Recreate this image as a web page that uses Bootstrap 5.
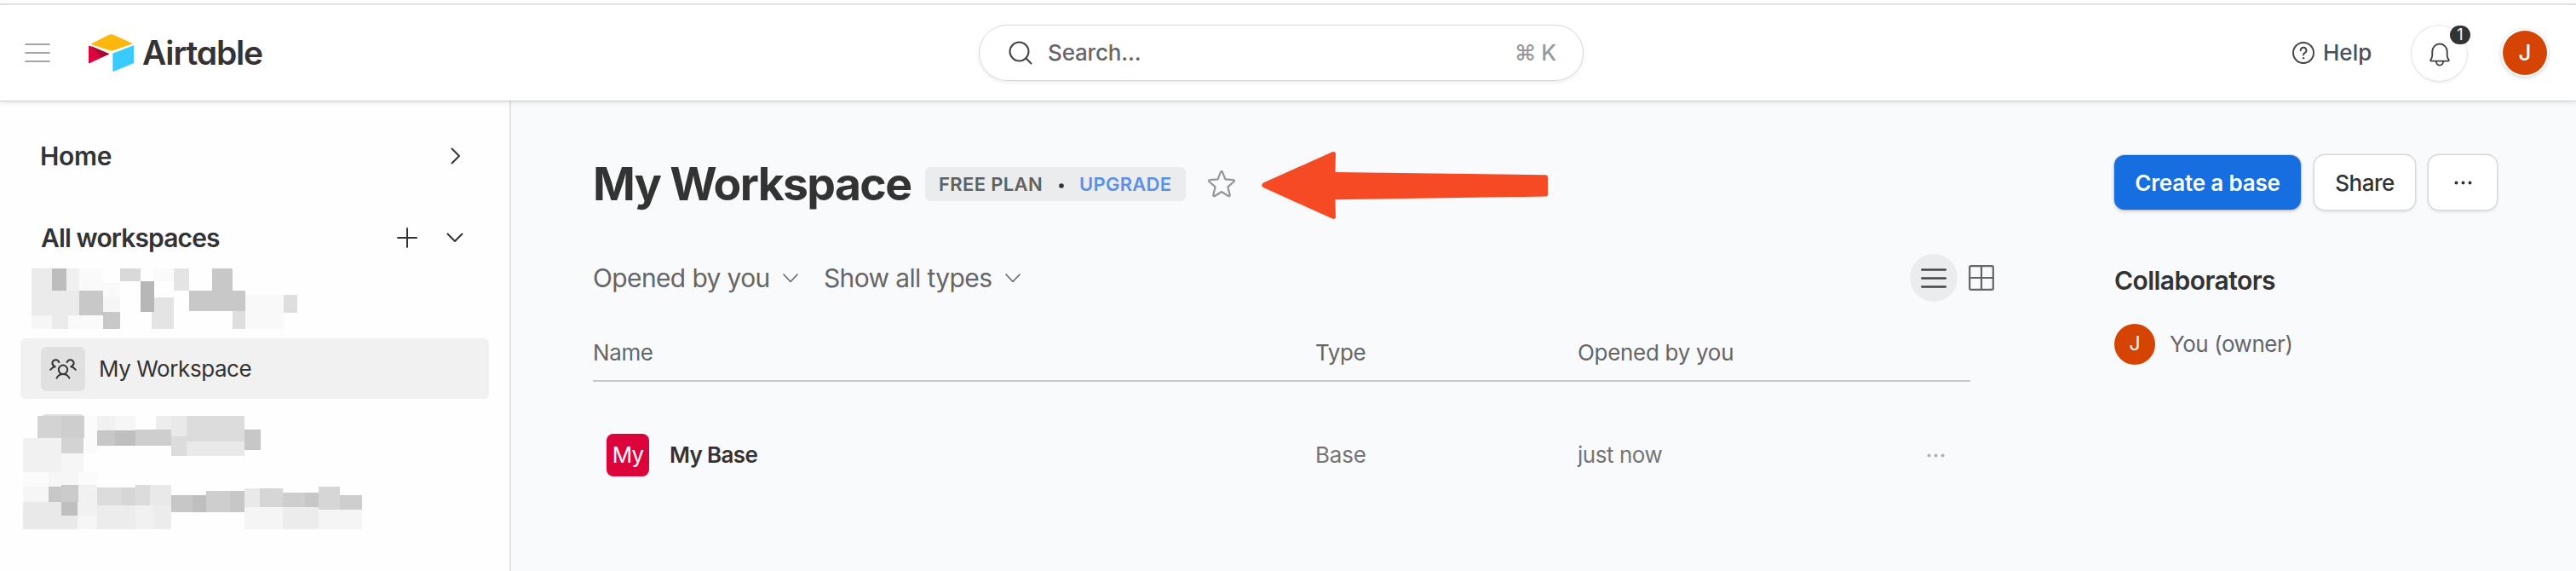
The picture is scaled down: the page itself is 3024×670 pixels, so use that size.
<!DOCTYPE html>
<html lang="en">
<head>
<meta charset="utf-8">
<meta name="viewport" content="width=device-width, initial-scale=1">
<title>My Workspace - Airtable</title>
<link href="https://cdn.jsdelivr.net/npm/bootstrap@5.3.0/dist/css/bootstrap.min.css" rel="stylesheet">
<style>
  body { font-family: Inter, "Liberation Sans", sans-serif; font-size: 26px; line-height: 1.2; color: #333; background: #f9fafc; height: 670px; overflow: hidden; }
  svg { display: block; flex: none; }
  .ico { fill: none; stroke: currentColor; stroke-linecap: round; stroke-linejoin: round; }
  .topbar { height: 114px; padding-right: 34px; border-top: 2px solid #e0e0e0; background: #fff; box-shadow: 0 1px 0 #cdd3d0, 0 2px 6px rgba(0,0,0,.12); z-index: 2; }
  .topline { height: 4px; background: #fff; }
  .brand-side { width: 1149px; padding-left: 29px; }
  .wordmark { font-size: 39px; font-weight: 600; letter-spacing: -1.15px; margin-left: 10px; font-feature-settings: "cv11"; }
  .searchbox { width: 710px; height: 66px; border: 1.5px solid #d9d9d9; box-shadow: 0 2px 4px rgba(0,0,0,.08); padding: 0 31px 0 34px; color: #666; letter-spacing: -.16px; font-weight: 450; }
  .avatar { background: #d54402; color: #fff; font-weight: 500; }
  .avatar-lg { width: 52px; height: 52px; box-shadow: 0 0 0 2px #fff, 0 1px 4px 2px rgba(0,0,0,.2); }
  .avatar-sm { width: 48px; height: 48px; font-size: 23px; font-weight: 400; }
  .bell { width: 65px; height: 65px; margin-left: 48px; box-shadow: 0 0 0 1px #e6e6e6, 0 2px 4px rgba(0,0,0,.08); color: #444; }
  .count { width: 24px; height: 22px; top: 0; left: 45px; background: #333; color: #fff; font-size: 18px; border-radius: 11px; }
  .sidebar { width: 600px; border-right: 2px solid #e3e3e3; background: #fefefe; padding-top: 35px; }
  .side-head { font-size: 30px; font-weight: 600; height: 60px; padding: 0 56px 0 47px; letter-spacing: -.3px; }
  .ws-item { margin: 11px 24px 18px; height: 71px; border-radius: 6px; background: #f1f1f1; padding-left: 24px; letter-spacing: -.43px; }
  .ws-icon { width: 52px; height: 52px; border-radius: 7px; background: #e0e0e0; margin-right: 16px; }
  .workspace { padding: 66px 92px 0 96px; }
  .col-bases { width: 1645px; }
  h1 { font-size: 53.5px; line-height: 64px; font-weight: 700; letter-spacing: -1.65px; margin: 0; width: 390px; }
  .plan { height: 40px; border-radius: 6px; background: #ebecee; padding: 0 16px; width: 306px; font-size: 22px; font-weight: 600; color: #616161; }
  .upgrade { color: #5a90e8; letter-spacing: .28px; }
  .filters { height: 56px; margin-top: 50px; color: #666; font-size: 30px; letter-spacing: -.63px; }
  .view-on { width: 56px; height: 56px; background: #ebecee; color: #444; }
  .base-table { width: 1617px; color: #666; }
  .t-head { margin-top: 27px; height: 67px; border-bottom: 2px solid #c8c9cb; letter-spacing: -.4px; }
  .t-row { height: 50px; margin-top: 61px; color: #757575; }
  .c-name { width: 848px; }
  .c-type { width: 308px; }
  .base-tile { width: 50px; height: 50px; border-radius: 8px; background: #dc043b; color: #fff; margin: 0 24px 0 16px; letter-spacing: -.8px; }
  .col-people { margin-left: 141px; margin-top: -2px; width: 450px; }
  .btn-tall { height: 64px; padding: 0; border-radius: 12px; font-size: 26px; border: 0; box-shadow: 0 0 0 1.5px #d8d9db, 0 2px 4px rgba(0,0,0,.12); background: #fff; color: #333; display: flex; align-items: center; justify-content: center; }
  .btn-create { background: #176ee1; color: #fff; width: 219px; font-weight: 600; letter-spacing: -.17px; box-shadow: 0 0 0 1px rgba(0,0,0,.12), 0 2px 4px rgba(0,0,0,.18); }
  .btn-share { width: 118px; font-weight: 500; letter-spacing: -.5px; }
  .collab { font-size: 30px; line-height: 40px; font-weight: 600; letter-spacing: -.55px; margin: 63px 0 31px; }
</style>
<script src="https://cdn.jsdelivr.net/npm/bootstrap@5.3.0/dist/js/bootstrap.bundle.min.js"></script>
</head>
<body class="d-flex flex-column">
<div class="topline flex-shrink-0"></div>
<header class="topbar d-flex align-items-center position-relative flex-shrink-0">
  <div class="brand-side d-flex align-items-center">
    <svg class="ico" width="30" height="22" viewBox="0 0 30 22" style="color:#a3a3a3" stroke-width="2"><path d="M1.2 1H28.8M1.2 11H28.8M1.2 21H28.8"/></svg>
    <svg style="margin-left:45px" width="53" height="44" viewBox="27 30 159 132" stroke-linejoin="round" stroke-width="4">
      <path fill="#fcb80c" stroke="#fcb80c" d="M39 65L99 35Q107 31 115 35L178 63L116 85Q107 88 100 85Z"/>
      <path fill="#dc043b" stroke="#dc043b" d="M29 73L95 100L29 131Z"/>
      <path fill="#a50a33" d="M36 72L101 100L73 112Z"/>
      <path fill="#39caff" stroke="#39caff" d="M114 99L184 72V131L114 160Z"/>
    </svg>
    <span class="wordmark">Airtable</span>
  </div>
  <div class="searchbox rounded-pill d-flex align-items-center">
    <svg class="ico" width="28" height="28" viewBox="0 0 28 28" stroke-width="2" style="color:#444"><circle cx="12.5" cy="12.5" r="11"/><path d="M20.3 20.3L26.5 26.5"/></svg>
    <span style="margin-left:18px">Search...</span>
    <span class="ms-auto d-flex" style="color:#999;gap:6px"><span>⌘</span><span>K</span></span>
  </div>
  <div class="ms-auto d-flex align-items-center">
    <svg class="ico" width="26" height="26" viewBox="0 0 26 26" stroke-width="1.9" style="color:#444"><circle cx="13" cy="13" r="12"/><path d="M9.7 10.2A3.4 3.4 0 1 1 14.6 13.2Q13 14 13 15.6"/><circle cx="13" cy="19.3" r=".8" fill="currentColor" stroke-width="1"/></svg>
    <span style="margin-left:10px;width:56px;color:#4f4f4f;font-weight:450">Help</span>
    <div class="bell rounded-circle d-flex align-items-center justify-content-center position-relative">
      <svg class="ico" width="24" height="28" viewBox="0 0 24 28" stroke-width="1.9" style="margin-top:3px"><path d="M3.3 10.2A8.7 8.7 0 0 1 20.7 10.2V14.5Q20.7 17.5 22.6 20.2Q23.2 21.6 21.8 21.6H2.2Q.8 21.6 1.4 20.2Q3.3 17.5 3.3 14.5ZM7.8 22Q8.3 26.6 12 26.6Q15.7 26.6 16.2 22"/></svg>
      <span class="count position-absolute d-flex align-items-center justify-content-center">1</span>
    </div>
    <div class="avatar avatar-lg rounded-circle d-flex align-items-center justify-content-center" style="margin-left:42px">J</div>
  </div>
</header>

<div class="d-flex flex-grow-1">
  <aside class="sidebar flex-shrink-0">
    <div class="side-head d-flex align-items-center justify-content-between">
      <span>Home</span>
      <svg class="ico" width="12" height="20" viewBox="0 0 12 20" stroke-width="2" style="margin-right:1px"><path d="M1.5 1.5L10 10L1.5 18.5"/></svg>
    </div>
    <div class="side-head d-flex align-items-center" style="margin-top:36px;padding-right:54px">
      <span style="letter-spacing:-.88px;margin-left:1px">All workspaces</span>
      <svg class="ico ms-auto" width="24" height="24" viewBox="0 0 24 24" stroke-width="2"><path d="M12 1V23M1 12H23"/></svg>
      <svg class="ico" width="20" height="12" viewBox="0 0 20 12" stroke-width="2" style="margin-left:34px"><path d="M1.5 1.5L10 10L18.5 1.5"/></svg>
    </div>
    <svg width="312" height="71" viewBox="94 45 789 213" preserveAspectRatio="none" shape-rendering="crispEdges" style="margin:6px 0 0 37px">
      <path fill="#ebebeb" d="M94 45h60v165h-60zM154 123h81v87h-81zM154 210h48v48h-48z"/>
      <path fill="#bdbdbd" d="M154 45h43v78h-43z"/><path fill="#f0f0f0" d="M197 45h38v78h-38z"/>
      <path fill="#fafafa" d="M235 45h71v78h-71zM306 96h51v48h-51zM202 210h104v48H202zM455 45h61v45h-61z"/>
      <path fill="#f6f6f6" d="M306 144h51v54h-51zM94 210h60v48h-60z"/>
      <path fill="#c8c8c8" d="M235 123h71v87h-71zM306 198h51v60h-51zM630 45h60v78h-60zM561 123h167v72H561z"/>
      <path fill="#d9d9d9" d="M357 45h60v45h-60z"/><path fill="#b7b7b7" d="M417 90h41v108h-41z"/>
      <path fill="#e4e4e4" d="M516 45h45v78h-45zM458 147h58v111h-66v-60h8z"/>
      <path fill="#dedede" d="M690 195h38v63h-38zM842 138h41v63h-41z"/><path fill="#f9f9f9" d="M728 138h114v120H728z"/>
    </svg>
    <div class="ws-item d-flex align-items-center">
      <div class="ws-icon d-flex align-items-center justify-content-center">
        <svg class="ico" width="32" height="24" viewBox="0 0 32 24" stroke-width="2"><circle cx="16" cy="12.8" r="5.2"/><path d="M8.6 22.6A8.2 8.2 0 0 1 23.4 22.6M1.2 12.8Q3.6 9.8 6.8 9.3Q2.8 7.3 3.5 4.2Q4.6 1 7.8 1.2Q10.2 1.4 11.3 4M30.8 12.8Q28.4 9.8 25.2 9.3Q29.2 7.3 28.5 4.2Q27.4 1 24.2 1.2Q21.8 1.4 20.7 4"/></svg>
      </div>
      <span>My Workspace</span>
    </div>
    <svg width="398" height="135" viewBox="68 558 1007 405" preserveAspectRatio="none" shape-rendering="crispEdges" style="margin-left:27px">
      <path fill="#e0e0e0" d="M124 564Q130 558 140 558H234Q244 558 250 564Z"/>
      <path fill="#d3d3d3" d="M111 564h71v78h-71zM182 642h66v54h-66z"/><path fill="#cecece" d="M182 564h68v78h-68zM402 612h106v57H402zM612 828h71v75h-71zM840 834h65v51h-65zM1009 843h66v51h-66z"/>
      <path fill="#f1f1f1" d="M68 642h114v120H68zM288 564h53v51h-53zM233 807h55v60h-55zM230 867h58v48h-58zM402 879h56v84h-56z"/>
      <path fill="#f6f6f6" d="M182 696h66v66h-66zM341 564h61v51h-61zM144 762h89v51h-89zM68 813h76v54H68zM230 915h58v48h-58z"/>
      <path fill="#fbfbfb" d="M250 564h38v132h-38zM68 762h76v51H68zM233 762h55v45h-55z"/>
      <path fill="#ededed" d="M463 564h45v48h-45z"/><path fill="#e9e9e9" d="M508 564h46v72h-46zM554 654h172v51H554zM445 807h63v72h-63zM726 819h45v66h-45zM68 867h114v96H68zM182 915h48v48h-48z"/>
      <path fill="#dcdcdc" d="M554 564h172v90H554zM508 636h46v69h-46zM288 816h71v63h-71zM402 807h43v72h-43z"/>
      <path fill="#c7c7c7" d="M288 615h53v54h-53zM726 612h48v72h-48zM144 813h38v54h-38zM508 843h64v60h-64zM683 828h43v75h-43zM905 834h41v51h-41z"/>
      <path fill="#bfbfbf" d="M341 615h61v54h-61zM182 867h48v48h-48zM572 843h40v60h-40z"/><path fill="#cbcbcb" d="M182 807h51v60h-51z"/>
      <path fill="#d6d6d6" d="M359 816h43v63h-43zM771 819h69v66h-69zM946 813h63v81h-63z"/>
      <path fill="#ececec" d="M288 879h114v84H288zM458 879h50v84h-50zM840 885h106v78H840z"/>
      <path fill="#f5f5f5" d="M726 885h114v78H726zM946 894h129v69H946z"/>
    </svg>
  </aside>

  <main class="workspace d-flex align-items-start flex-grow-1">
    <section class="col-bases flex-shrink-0">
      <div class="d-flex align-items-center">
        <h1 class="text-nowrap flex-shrink-0">My Workspace</h1>
        <div class="plan d-flex align-items-center flex-shrink-0">
          <span style="width:141px;letter-spacing:.36px">FREE PLAN</span>
          <svg width="6" height="6" style="margin-right:18px;margin-top:3px"><circle cx="3" cy="3" r="2.8" fill="#333"/></svg>
          <span class="upgrade">UPGRADE</span>
        </div>
        <svg class="ico" width="34" height="32" viewBox="0 0 34 32" stroke-width="2.2" style="color:#959697;margin-left:25px"><path d="M16 1.8Q17 .2 18 1.8L21.4 10.4L31 11.2Q32.8 11.6 31.6 13L24.4 19.3L26.7 28.8Q26.8 30.6 25 30L17 25L9 30Q7.2 30.6 7.3 28.8L9.6 19.3L2.4 13Q1.2 11.6 3 11.2L12.6 10.4Z"/></svg>
        <svg width="337" height="81" viewBox="0 0 337 81" style="margin:-7px 0 -10px 30px"><path fill="#f64a25" d="M2 37.5L83 1.2Q87 0 87 3.5L86.5 25L333 28.3Q336 28.5 336 31V51Q336 53.6 333 53.6L86.5 57.3L87 77.5Q87 81 83 79.5L2 43Q-1.5 40.3 2 37.5Z"/></svg>
      </div>
      <div class="filters d-flex align-items-center">
        <span style="width:223px">Opened by you</span>
        <svg class="ico" width="18" height="11" viewBox="0 0 18 11" stroke-width="1.6"><path d="M1 1L9 9.5L17 1"/></svg>
        <span style="margin-left:30px;width:213px">Show all types</span>
        <svg class="ico" width="18" height="11" viewBox="0 0 18 11" stroke-width="1.6"><path d="M1 1L9 9.5L17 1"/></svg>
        <div class="view-on rounded-circle d-flex align-items-center justify-content-center ms-auto">
          <svg class="ico" width="30" height="23" viewBox="0 0 30 23" stroke-width="2.4"><path d="M1.2 1.5H28.8M1.2 11.5H28.8M1.2 21.5H28.8"/></svg>
        </div>
        <svg class="ico" width="30" height="30" viewBox="0 0 30 30" stroke-width="2.2" style="margin-left:13px"><rect x="1.2" y="1.2" width="27.6" height="27.6" rx="1.5"/><path d="M15 1V29M1 15H29"/></svg>
      </div>
      <div class="base-table">
        <div class="t-head d-flex align-items-center">
          <div class="c-name">Name</div><div class="c-type">Type</div><div style="letter-spacing:-.3px">Opened by you</div>
        </div>
        <div class="t-row d-flex align-items-center">
          <div class="c-name d-flex align-items-center">
            <div class="base-tile d-flex align-items-center justify-content-center">My</div>
            <span style="color:#333;font-weight:600;letter-spacing:-.65px">My Base</span>
          </div>
          <div class="c-type" style="letter-spacing:-.2px">Base</div>
          <div style="letter-spacing:-.45px">just now</div>
          <svg class="ms-auto" width="21" height="5" viewBox="0 0 21 5" fill="#b0b1b2" style="margin-right:30px"><circle cx="2.5" cy="2.5" r="2"/><circle cx="10.5" cy="2.5" r="2"/><circle cx="18.5" cy="2.5" r="2"/></svg>
        </div>
      </div>
    </section>
    <aside class="col-people flex-shrink-0">
      <div class="d-flex" style="gap:16px">
        <button class="btn btn-tall btn-create">Create a base</button>
        <button class="btn btn-tall btn-share">Share</button>
        <button class="btn btn-tall" style="width:80px"><svg width="21" height="5" viewBox="0 0 21 5" fill="#333"><circle cx="2.5" cy="2.5" r="2"/><circle cx="10.5" cy="2.5" r="2"/><circle cx="18.5" cy="2.5" r="2"/></svg></button>
      </div>
      <h2 class="collab">Collaborators</h2>
      <div class="d-flex align-items-center" style="color:#666">
        <div class="avatar avatar-sm rounded-circle d-flex align-items-center justify-content-center">J</div>
        <span style="margin-left:17px;letter-spacing:-.44px">You (owner)</span>
      </div>
    </aside>
  </main>
</div>
</body>
</html>
